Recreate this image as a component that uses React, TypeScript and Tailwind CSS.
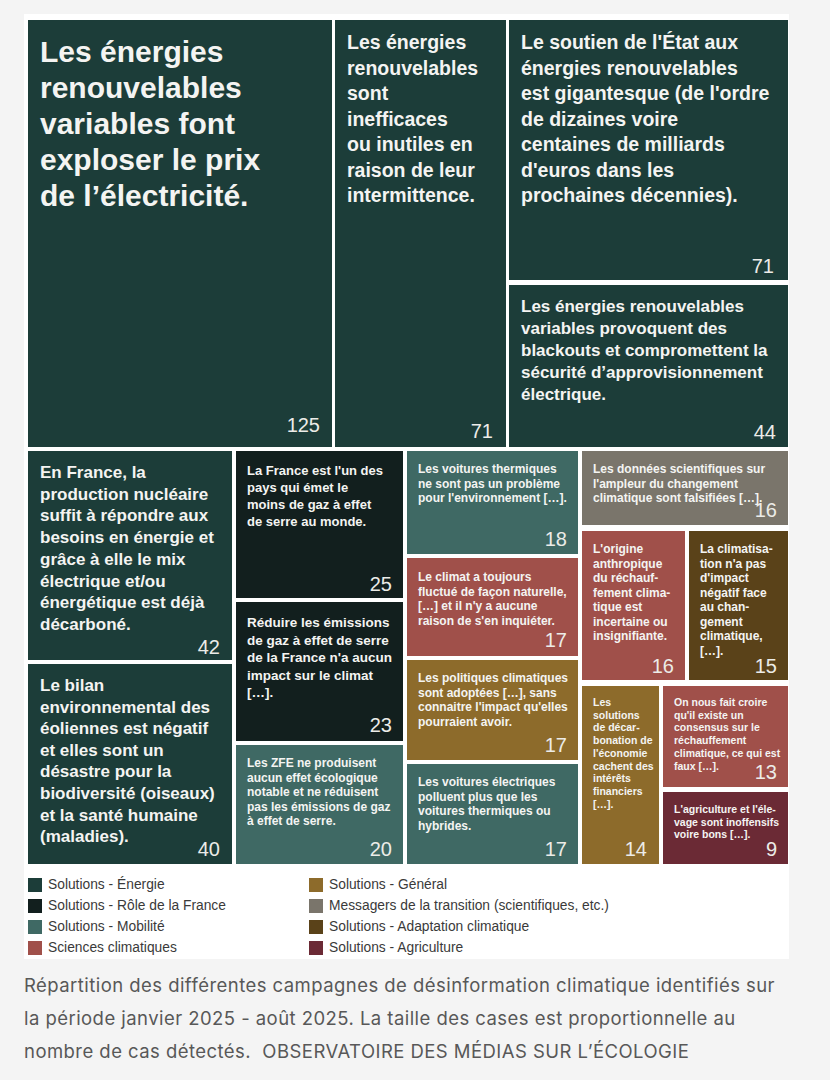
import React from "react";

type TileProps = {
  cls: string;
  text: string[];
  textCls: string;
  num: string;
  numCls: string;
};

function Tile({ cls, text, textCls, num, numCls }: TileProps) {
  return (
    <div className={`relative overflow-hidden text-[#f4f4f2] ${cls}`}>
      <div className={`font-bold whitespace-nowrap ${textCls}`}>
        {text.map((t, i) => (
          <div key={i}>{t}</div>
        ))}
      </div>
      <div className={`absolute font-normal text-[20px] leading-[20px] text-[#ecece8] ${numCls}`}>{num}</div>
    </div>
  );
}

const legendLeft = [
  { c: "bg-[#1c3d39]", t: "Solutions - Énergie" },
  { c: "bg-[#121f1e]", t: "Solutions - Rôle de la France" },
  { c: "bg-[#3f6964]", t: "Solutions - Mobilité" },
  { c: "bg-[#a0504a]", t: "Sciences climatiques" },
];
const legendRight = [
  { c: "bg-[#8d6b2b]", t: "Solutions - Général" },
  { c: "bg-[#7a756b]", t: "Messagers de la transition (scientifiques, etc.)" },
  { c: "bg-[#5a4219]", t: "Solutions - Adaptation climatique" },
  { c: "bg-[#6b2a35]", t: "Solutions - Agriculture" },
];

function LegendCol({ items, w }: { items: { c: string; t: string }[]; w: string }) {
  return (
    <div className={`flex flex-col gap-[7px] ${w}`}>
      {items.map((it, i) => (
        <div key={i} className="flex items-center gap-[6px] h-[14px]">
          <div className={`w-[14px] h-[14px] shrink-0 ${it.c}`} />
          <div className="text-[13.8px] leading-[14px] text-[#3a3a3a] whitespace-nowrap">{it.t}</div>
        </div>
      ))}
    </div>
  );
}

export default function App() {
  return (
    <div className="min-h-[1080px] bg-[#f4f4f4] pt-[14px]" style={{ fontFamily: '"Liberation Sans", Arial, sans-serif' }}>
      <div className="ml-[24px] w-[765px] h-[945px] bg-white pl-[4px] pt-[6px]">
        <div className="flex flex-col gap-[4px] w-[760px]">
          {/* Row 1 */}
          <div className="flex gap-[3px] h-[427px]">
            <Tile
              cls="w-[304px] h-full bg-[#1c3d39] pl-[12px] pt-[14px]"
              text={["Les énergies", "renouvelables", "variables font", "exploser le prix", "de l’électricité."]}
              textCls="text-[30px] leading-[36px]"
              num="125"
              numCls="right-[12px] bottom-[12px]"
            />
            <Tile
              cls="w-[171px] h-full bg-[#1c3d39] pl-[12px] pt-[10px]"
              text={["Les énergies", "renouvelables", "sont", "inefficaces", "ou inutiles en", "raison de leur", "intermittence."]}
              textCls="text-[19.5px] leading-[25.5px]"
              num="71"
              numCls="right-[13px] bottom-[6px]"
            />
            <div className="flex flex-col gap-[5px] w-[279px]">
              <Tile
                cls="h-[260px] bg-[#1c3d39] pl-[12px] pt-[10px]"
                text={[
                  "Le soutien de l'État aux",
                  "énergies renouvelables",
                  "est gigantesque (de l'ordre",
                  "de dizaines voire",
                  "centaines de milliards",
                  "d'euros dans les",
                  "prochaines décennies).",
                ]}
                textCls="text-[19.5px] leading-[25.5px]"
                num="71"
                numCls="right-[14px] bottom-[4px]"
              />
              <Tile
                cls="h-[162px] bg-[#1c3d39] pl-[12px] pt-[11px]"
                text={[
                  "Les énergies renouvelables",
                  "variables provoquent des",
                  "blackouts et compromettent la",
                  "sécurité d’approvisionnement",
                  "électrique.",
                ]}
                textCls="text-[17px] leading-[22px]"
                num="44"
                numCls="right-[12px] bottom-[5px]"
              />
            </div>
          </div>

          {/* Row 2 */}
          <div className="flex gap-[4px] h-[413px]">
            {/* Col A */}
            <div className="flex flex-col gap-[4px] w-[204px]">
              <Tile
                cls="h-[209px] bg-[#1c3d39] pl-[12px] pt-[11px]"
                text={[
                  "En France, la",
                  "production nucléaire",
                  "suffit à répondre aux",
                  "besoins en énergie et",
                  "grâce à elle le mix",
                  "électrique et/ou",
                  "énergétique est déjà",
                  "décarboné.",
                ]}
                textCls="text-[17px] leading-[21.7px]"
                num="42"
                numCls="right-[12px] bottom-[3px]"
              />
              <Tile
                cls="h-[200px] bg-[#1c3d39] pl-[12px] pt-[11px]"
                text={[
                  "Le bilan",
                  "environnemental des",
                  "éoliennes est négatif",
                  "et elles sont un",
                  "désastre pour la",
                  "biodiversité (oiseaux)",
                  "et la santé humaine",
                  "(maladies).",
                ]}
                textCls="text-[17px] leading-[21.6px]"
                num="40"
                numCls="right-[12px] bottom-[5px]"
              />
            </div>
            {/* Col B */}
            <div className="flex flex-col gap-[4px] w-[167px]">
              <Tile
                cls="h-[147px] bg-[#121f1e] pl-[11px] pt-[11px]"
                text={["La France est l'un des", "pays qui émet le", "moins de gaz à effet", "de serre au monde."]}
                textCls="text-[13px] leading-[17px]"
                num="25"
                numCls="right-[11px] bottom-[4px]"
              />
              <Tile
                cls="h-[139px] bg-[#121f1e] pl-[11px] pt-[12px]"
                text={["Réduire les émissions", "de gaz à effet de serre", "de la France n'a aucun", "impact sur le climat", "[…]."]}
                textCls="text-[13.5px] leading-[17.5px]"
                num="23"
                numCls="right-[11px] bottom-[6px]"
              />
              <Tile
                cls="h-[119px] bg-[#3f6964] pl-[11px] pt-[11px]"
                text={[
                  "Les ZFE ne produisent",
                  "aucun effet écologique",
                  "notable et ne réduisent",
                  "pas les émissions de gaz",
                  "à effet de serre.",
                ]}
                textCls="text-[12px] leading-[14.5px]"
                num="20"
                numCls="right-[11px] bottom-[5px]"
              />
            </div>
            {/* Col C */}
            <div className="flex flex-col gap-[4px] w-[171px]">
              <Tile
                cls="h-[103px] bg-[#3f6964] pl-[11px] pt-[11px]"
                text={["Les voitures thermiques", "ne sont pas un problème", "pour l'environnement […]."]}
                textCls="text-[12px] leading-[14.5px]"
                num="18"
                numCls="right-[11px] bottom-[5px]"
              />
              <Tile
                cls="h-[98px] bg-[#a0504a] pl-[11px] pt-[12px]"
                text={["Le climat a toujours", "fluctué de façon naturelle,", "[…] et il n'y a aucune", "raison de s'en inquiéter."]}
                textCls="text-[12px] leading-[14.5px]"
                num="17"
                numCls="right-[11px] bottom-[6px]"
              />
              <Tile
                cls="h-[100px] bg-[#8d6b2b] pl-[11px] pt-[11px]"
                text={["Les politiques climatiques", "sont adoptées […], sans", "connaitre l'impact qu'elles", "pourraient avoir."]}
                textCls="text-[12px] leading-[14.5px]"
                num="17"
                numCls="right-[11px] bottom-[5px]"
              />
              <Tile
                cls="h-[100px] bg-[#3f6964] pl-[11px] pt-[11px]"
                text={["Les voitures électriques", "polluent plus que les", "voitures thermiques ou", "hybrides."]}
                textCls="text-[12px] leading-[14.5px]"
                num="17"
                numCls="right-[11px] bottom-[5px]"
              />
            </div>
            {/* Col D */}
            <div className="flex flex-col gap-[6px] w-[206px]">
              <Tile
                cls="h-[74px] bg-[#7a756b] pl-[11px] pt-[11px]"
                text={["Les données scientifiques sur", "l'ampleur du changement", "climatique sont falsifiées […]."]}
                textCls="text-[12px] leading-[14.5px]"
                num="16"
                numCls="right-[11px] bottom-[5px]"
              />
              <div className="flex gap-[4px] h-[149px]">
                <Tile
                  cls="w-[103px] h-full bg-[#a0504a] pl-[11px] pt-[11px]"
                  text={["L'origine", "anthropique", "du réchauf-", "fement clima-", "tique est", "incertaine ou", "insignifiante."]}
                  textCls="text-[12px] leading-[14.5px]"
                  num="16"
                  numCls="right-[11px] bottom-[4px]"
                />
                <Tile
                  cls="w-[99px] h-full bg-[#5a4219] pl-[11px] pt-[11px]"
                  text={["La climatisa-", "tion n'a pas", "d'impact", "négatif face", "au chan-", "gement", "climatique,", "[…]."]}
                  textCls="text-[12px] leading-[14.5px]"
                  num="15"
                  numCls="right-[11px] bottom-[4px]"
                />
              </div>
              <div className="flex gap-[4px] h-[178px]">
                <Tile
                  cls="w-[77px] h-full bg-[#8d6b2b] pl-[11px] pt-[10px]"
                  text={["Les", "solutions", "de décar-", "bonation de", "l'économie", "cachent des", "intérêts", "financiers", "[…]."]}
                  textCls="text-[10.5px] leading-[12.7px]"
                  num="14"
                  numCls="right-[12px] bottom-[5px]"
                />
                <div className="flex flex-col gap-[5px] w-[125px]">
                  <Tile
                    cls="h-[101px] bg-[#a0504a] pl-[11px] pt-[10px]"
                    text={["On nous fait croire", "qu'il existe un", "consensus sur le", "réchauffement", "climatique, ce qui est", "faux […]."]}
                    textCls="text-[10.5px] leading-[12.7px]"
                    num="13"
                    numCls="right-[11px] bottom-[5px]"
                  />
                  <Tile
                    cls="h-[72px] bg-[#6b2a35] pl-[11px] pt-[11px]"
                    text={["L'agriculture et l'éle-", "vage sont inoffensifs", "voire bons […]."]}
                    textCls="text-[10.5px] leading-[12.7px]"
                    num="9"
                    numCls="right-[11px] bottom-[5px]"
                  />
                </div>
              </div>
            </div>
          </div>
        </div>

        {/* Legend */}
        <div className="flex mt-[14px]">
          <LegendCol items={legendLeft} w="w-[281px]" />
          <LegendCol items={legendRight} w="w-[470px]" />
        </div>
      </div>

      {/* Caption */}
      <div
        className="px-[24px] pt-[10px] text-[18.5px] leading-[33px] tracking-[0.45px] text-[#585858]"
        style={{ fontFamily: 'Inter, "Noto Sans", sans-serif' }}
      >
        <div className="whitespace-nowrap">Répartition des différentes campagnes de désinformation climatique identifiés sur</div>
        <div className="whitespace-nowrap">la période janvier 2025 - août 2025. La taille des cases est proportionnelle au</div>
        <div className="whitespace-pre">nombre de cas détectés.  OBSERVATOIRE DES MÉDIAS SUR L’ÉCOLOGIE</div>
      </div>
    </div>
  );
}
